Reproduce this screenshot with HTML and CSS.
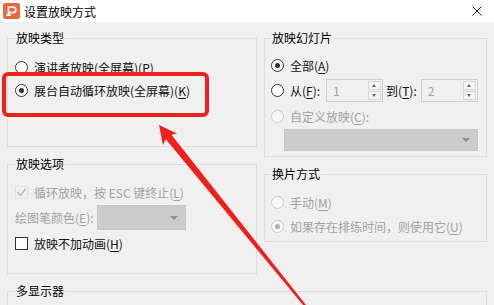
FILE: index.html
```html
<!DOCTYPE html>
<html lang="zh-CN">
<head>
    <meta charset="UTF-8">
    <title>设置放映方式</title>
    <link rel="stylesheet" href="styles.css">
</head>
<body>
    <div class="dialog">
        <!-- Title Bar -->
        <div class="titlebar">
            <svg class="app-icon" viewBox="0 0 17 16">
                <rect width="17" height="16" rx="2.5" fill="#e9673f"/>
                <path d="M5.5 13V4h4.5a2.8 2.8 0 0 1 0 5.6H5.5" fill="none" stroke="#fff" stroke-width="1.7"/>
                <path d="M3 12.2h5" stroke="#fff" stroke-width="1.5"/>
            </svg>
            <span class="title">设置放映方式</span>
            <svg class="close" viewBox="0 0 10 10">
                <path d="M0.5 0.5L9.5 9.5M9.5 0.5L0.5 9.5" stroke="#222" stroke-width="1"/>
            </svg>
        </div>

        <div class="content">
            <div class="columns">
                <!-- Left Column -->
                <div class="col col-left">
                    <fieldset class="group group-type">
                        <legend>放映类型</legend>
                        <div class="opt"><span class="radio"></span>演讲者放映(全屏幕)(P)</div>
                        <div class="opt"><span class="radio checked"></span>展台自动循环放映(全屏幕)(<u>K</u>)</div>
                    </fieldset>

                    <fieldset class="group group-options">
                        <legend>放映选项</legend>
                        <div class="opt disabled">
                            <span class="check">
                                <svg viewBox="0 0 11 11"><path d="M1.5 5.5l2.8 3 5.2-6.5" fill="none" stroke="#b4b4b4" stroke-width="1.4"/></svg>
                            </span>循环放映，按 ESC 键终止(<u>L</u>)
                        </div>
                        <div class="opt disabled pen-row">
                            <span>绘图笔颜色(<u>E</u>):</span>
                            <span class="combo combo-pen"><span class="caret"></span></span>
                        </div>
                        <div class="opt"><span class="check"></span>放映不加动画(<u>H</u>)</div>
                    </fieldset>
                </div>

                <!-- Right Column -->
                <div class="col col-right">
                    <fieldset class="group group-slides">
                        <legend>放映幻灯片</legend>
                        <div class="opt"><span class="radio checked"></span>全部(<u>A</u>)</div>
                        <div class="opt range-row">
                            <span class="radio"></span>从(<u>F</u>):
                            <span class="spin spin-from">
                                <span class="spin-value">1</span>
                                <span class="spin-btns"><span class="up"></span><span class="down"></span></span>
                            </span>
                            <span class="to-label">到(<u>T</u>):</span>
                            <span class="spin spin-to">
                                <span class="spin-value">2</span>
                                <span class="spin-btns"><span class="up"></span><span class="down"></span></span>
                            </span>
                        </div>
                        <div class="opt disabled"><span class="radio"></span>自定义放映(<u>C</u>):</div>
                        <span class="combo combo-custom"><span class="caret"></span></span>
                    </fieldset>

                    <fieldset class="group group-advance">
                        <legend>换片方式</legend>
                        <div class="opt disabled"><span class="radio"></span>手动(<u>M</u>)</div>
                        <div class="opt disabled"><span class="radio checked"></span>如果存在排练时间，则使用它(<u>U</u>)</div>
                    </fieldset>
                </div>
            </div>

            <fieldset class="group group-monitor">
                <legend>多显示器</legend>
            </fieldset>
        </div>

        <!-- Annotation overlay -->
        <div class="highlight"></div>
        <svg class="arrow" viewBox="0 0 494 305">
            <polygon fill="#ee1f1c" points="159,125 177,133.5 171.4,134.8 306,305 303,305 165.8,139.3 163,145"/>
        </svg>
    </div>
</body>
</html>
```

FILE: styles.css
```css
/* General */
* {
    box-sizing: border-box;
}
body {
    margin: 0;
    width: 494px;
    height: 305px;
    overflow: hidden;
    background: #f0f0f0;
    font-family: "Noto Sans CJK SC", "Microsoft YaHei", sans-serif;
    font-size: 12px;
    color: #111;
}
.dialog {
    position: relative;
    height: 305px;
    overflow: hidden;
}

/* Title Bar */
.titlebar {
    height: 22px;
    background: #fff;
    display: flex;
    align-items: center;
    padding: 0 12px 0 3px;
}
.app-icon {
    width: 17px;
    height: 16px;
    margin-right: 4px;
}
.title {
    flex: 1;
    color: #000;
}
.close {
    width: 10px;
    height: 10px;
}

/* Layout */
.content {
    padding: 8px 7px 0 7px;
}
.columns {
    display: flex;
    gap: 7px;
    align-items: flex-start;
}
.col {
    display: flex;
    flex-direction: column;
}
.col-left {
    width: 250px;
}
.col-right {
    width: 223px;
}

/* Group Box */
.group {
    margin: 0;
    border: 1px solid #dcdcdc;
    padding: 0 7px;
    min-width: 0;
}
.group legend {
    padding: 0 1px;
    line-height: 16px;
    color: #000;
}
.group-type {
    padding-top: 10px;
    padding-bottom: 45px;
}
.group-type .opt + .opt {
    margin-top: 1px;
}
.group-options {
    margin-top: 9px;
    padding-top: 9px;
    padding-bottom: 19px;
}
.group-options .opt + .opt {
    margin-top: 2px;
}
.group-slides {
    padding: 8px 6px 5px 6px;
}
.group-slides .opt + .opt {
    margin-top: 3px;
}
.group-advance {
    margin-top: 9px;
    padding: 9px 6px 4px 6px;
}
.group-advance .opt + .opt {
    margin-top: 2px;
}
.group-monitor {
    margin-top: 9px;
    padding-bottom: 6px;
    border-bottom: none;
}

/* Option Rows */
.opt {
    display: flex;
    align-items: center;
    height: 22px;
    white-space: nowrap;
}
.opt u {
    text-decoration-thickness: 1px;
    text-underline-offset: 2px;
}
.disabled {
    color: #a2a2a2;
}

/* Radio */
.radio {
    flex: none;
    position: relative;
    width: 13px;
    height: 13px;
    margin-right: 6px;
    border: 1px solid #333;
    border-radius: 50%;
    background: #fff;
}
.radio.checked::after {
    content: "";
    position: absolute;
    left: 3px;
    top: 3px;
    width: 5px;
    height: 5px;
    border-radius: 50%;
    background: #333;
}
.disabled .radio {
    border-color: #cbcbcb;
    background: #f7f7f7;
}
.disabled .radio.checked::after {
    background: #b0b0b0;
}

/* Checkbox */
.check {
    flex: none;
    width: 13px;
    height: 13px;
    margin-right: 6px;
    border: 1px solid #333;
    background: #fff;
    display: flex;
}
.check svg {
    width: 11px;
    height: 11px;
}
.disabled .check {
    border-color: #e2e2e2;
    background: #f0f0f0;
}

/* Combo Box */
.pen-row {
    height: 25px;
}
.combo {
    position: relative;
    display: block;
    height: 22px;
    background: #cccccc;
    border: 1px solid #c6c6c6;
}
.combo-pen {
    width: 89px;
    height: 25px;
    margin-left: 3px;
}
.combo-custom {
    width: 194px;
    margin: 2px 0 0 13px;
}
.caret {
    position: absolute;
    right: 7px;
    top: 50%;
    margin-top: -2px;
    border-left: 4px solid transparent;
    border-right: 4px solid transparent;
    border-top: 4px solid #8e8e8e;
}

/* Spin Box */
.range-row {
    height: 23px;
}
.spin {
    display: flex;
    align-items: center;
    width: 57px;
    height: 23px;
    border: 1px solid #cfcfcf;
    color: #a2a2a2;
}
.spin-from {
    margin-left: 6px;
}
.spin-to {
    margin-left: 4px;
}
.to-label {
    margin-left: 3px;
}
.spin-value {
    flex: 1;
    padding-left: 6px;
}
.spin-btns {
    display: flex;
    flex-direction: column;
    gap: 1px;
    width: 13px;
    height: 19px;
    margin-right: 1px;
}
.spin-btns span {
    flex: 1;
    position: relative;
    border: 1px solid #d6d6d6;
    background: #f4f4f4;
}
.spin-btns .up::after,
.spin-btns .down::after {
    content: "";
    position: absolute;
    left: 3px;
    top: 2px;
    border-left: 2.5px solid transparent;
    border-right: 2.5px solid transparent;
}
.spin-btns .up::after {
    border-bottom: 3px solid #666;
}
.spin-btns .down::after {
    border-top: 3px solid #666;
}

/* Annotation */
.highlight {
    position: absolute;
    left: 2px;
    top: 72px;
    width: 207px;
    height: 45px;
    border: 4px solid #ef211c;
    border-radius: 6px;
}
.arrow {
    position: absolute;
    left: 0;
    top: 0;
    width: 494px;
    height: 305px;
    pointer-events: none;
}
```
